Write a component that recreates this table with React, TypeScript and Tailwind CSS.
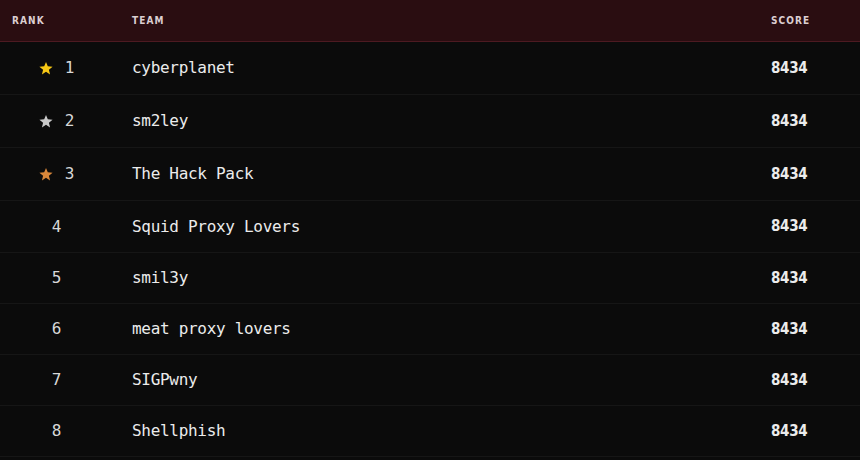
import React from "react";

const rows = [
  { rank: 1, team: "cyberplanet", score: 8434, star: "#f7c815" },
  { rank: 2, team: "sm2ley", score: 8434, star: "#c9c9c9" },
  { rank: 3, team: "The Hack Pack", score: 8434, star: "#d9873a" },
  { rank: 4, team: "Squid Proxy Lovers", score: 8434 },
  { rank: 5, team: "smil3y", score: 8434 },
  { rank: 6, team: "meat proxy lovers", score: 8434 },
  { rank: 7, team: "SIGPwny", score: 8434 },
  { rank: 8, team: "Shellphish", score: 8434 },
];

function Star({ color }: { color: string }) {
  return (
    <svg width="14" height="14" viewBox="0 0 24 24" className="shrink-0">
      <path
        fill={color}
        d="M12 1.5l3.1 7.6 8.2.6-6.3 5.3 2 8-7-4.4-7 4.4 2-8L.7 9.7l8.2-.6z"
      />
    </svg>
  );
}

export default function App() {
  return (
    <div className="w-[860px] h-[460px] bg-[#0b0b0b] overflow-hidden">
      <div className="flex items-center h-[42px] bg-[#2a0d11] border-b border-[#4d1a21] text-[10px] font-bold tracking-[1.1px] text-[#dccfd1] [font-family:'DejaVu_Sans_Condensed','DejaVu_Sans',sans-serif]">
        <div className="w-[132px] pl-3">RANK</div>
        <div className="flex-1">TEAM</div>
        <div className="w-[89px]">SCORE</div>
      </div>
      {rows.map((r, i) => (
        <div
          key={r.rank}
          className={`flex items-center border-b border-[#161616] ${
            i < 3 ? "h-[53px]" : i === 3 ? "h-[52px]" : "h-[51px]"
          }`}
        >
          <div className="w-[110px] flex items-center justify-center gap-[12px] pl-[3px] text-[16px] text-[#d8d8d8] [font-family:'DejaVu_Sans_Mono',monospace]">
            {r.star && <Star color={r.star} />}
            <span>{r.rank}</span>
          </div>
          <div className="ml-[22px] flex-1 text-[16px] tracking-[-0.3px] text-[#ececec] [font-family:'DejaVu_Sans_Mono',monospace]">
            {r.team}
          </div>
          <div className="w-[89px] text-[15px] font-bold tracking-[-0.3px] text-[#ececec] [font-family:'DejaVu_Sans_Condensed','DejaVu_Sans',sans-serif]">
            {r.score}
          </div>
        </div>
      ))}
    </div>
  );
}
